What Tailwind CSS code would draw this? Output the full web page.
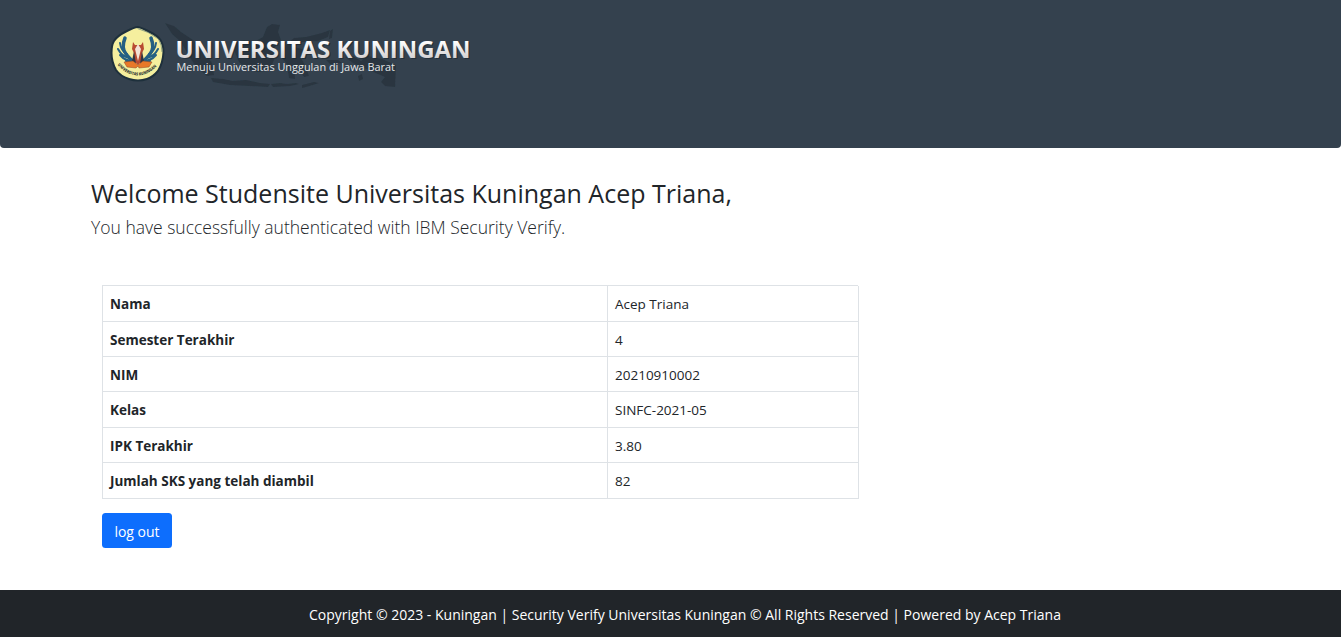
<!DOCTYPE html>
<html lang="id">
<head>
<meta charset="utf-8">
<title>Studensite Universitas Kuningan</title>
<script src="https://cdn.jsdelivr.net/npm/@tailwindcss/browser@4"></script>
</head>
<body class="h-[637px] overflow-hidden bg-white text-[#212529] font-['Open_Sans','Noto_Sans',sans-serif] text-[14px] flex flex-col">
<header class="h-[148px] shrink-0 bg-[#34414e] rounded-b-[4px] pl-[104px] pt-4">
<svg width="380" height="76" viewBox="104 16 380 76" role="img" aria-label="Universitas Kuningan">
  <defs>
    <linearGradient id="silver" x1="0" y1="0" x2="0" y2="1"><stop offset=".3" stop-color="#fff"/><stop offset=".8" stop-color="#d5d2d3"/></linearGradient>
    <path id="ring" d="M117.500 65 Q137.500 86 158.500 65"/>
    <filter id="soft"><feGaussianBlur stdDeviation=".6"/></filter>
  </defs>
  <g fill="#293640" filter="url(#soft)">
    <path d="M165 23l9 3 7 6 12 8 11 12 8 11 2 12-7 1-10-8-8-12-8-14-9-8z"/>
    <path d="M236 42l8-2 12 1 7-4 4-10 5-3 8 1-2 7 3 8-6 7-1 13-5 11-12 1-10-3-8-7-5-12z"/>
    <path d="M211 78l12 1 10 2 13-1 14 3 10 1-2 3-18-1-20-1-17-3z"/>
    <path d="M286 45l8-7 12-1 16-4 8-3-2 7-10 4-16 1-8 5 8 2 9-1-5 6-5 4 5 9 3 9-5 1-6-10-4 1 1 11-6-1-2-14-5-6z"/>
    <path d="M271 84l9-1 7 1 9-1 3 1-9 2-17 1zM302 85l12-3 5 1-13 4-4 1zM330 31l3-2-1 9-3 1zM326 60h12l4 3-12 1zM345 57l8-1 8 5 7-5 14 3 14 6-1 22-10-1-4-4 4-5-14-6-9-4-9-4zM358 76l4-2 1 5-4 2z"/>
  </g>
  <path d="M137.500 27 Q140 27 149 31.500 Q158 36 160.500 40 Q163.500 45 163.500 52 Q163 63 158 71 Q153 77 147 79 Q138 82 129 79 Q120 76 116 70 Q111.500 62 111.500 53 Q111.500 45 114 41 Q117 36 126 31.500 Q135 27 137.500 27z" fill="#f5ef9e" stroke="#1e303c" stroke-width="2"/>
  <path d="M137.500 28.500 Q148 31 158.500 39 Q162 45 162 52" fill="none" stroke="#52736e" stroke-width=".6"/>
  <g fill="none" stroke="#256083" stroke-linecap="round">
    <path d="M125 38q-4 10 1 16t8 8M151 38q4 10-1 16t-8 8" stroke-width="3.500"/>
    <path d="M120 43q1 8 7 11M156 43q-1 8-7 11M118 49q4 8 12 9M158 49q-4 8-12 9M120 55q5 6 13 6M156 55q-5 6-13 6M126 61h7M150 61h-7" stroke-width="2"/>
  </g>
  <path d="M133 42l2 3h6l2-3 1 7-2 4v8l-4 4-4-4v-8l-2-4z" fill="#b84b32"/>
  <path d="M138 44l-3 5 3 12 3-12z" fill="#f4e2d6"/>
  <path d="M134 51l-2 10 4 3zM142 51l2 10-4 3z" fill="#333541"/>
  <path d="M124 62l9-1 5 4 5-4 9 1-3 5-10 1-1-2-2 2-9-1z" fill="#e87828" stroke="#8b4927" stroke-width=".5"/>
  <text font-family="Open Sans" font-size="4.200" font-weight="800" fill="#343c36"><textPath href="#ring" textLength="45" lengthAdjust="spacingAndGlyphs">UNIVERSITAS KUNINGAN</textPath></text>
  <text x="176" y="58" transform="translate(.8 1.2)" textLength="295" lengthAdjust="spacingAndGlyphs" font-family="Open Sans" font-weight="700" font-size="24" fill="#1e2932" opacity=".7">UNIVERSITAS KUNINGAN</text>
  <text x="175.500" y="57.500" textLength="295" lengthAdjust="spacingAndGlyphs" font-family="Open Sans" font-weight="700" font-size="24" fill="url(#silver)">UNIVERSITAS KUNINGAN</text>
  <text x="176.500" y="71" textLength="218.500" lengthAdjust="spacingAndGlyphs" font-family="Open Sans" font-size="11" fill="#e6e8ea">Menuju Universitas Unggulan di Jawa Barat</text>
</svg>
</header>
<main class="flex-1 pl-[91px] pt-[28px]">
  <h1 class="h-[34px] leading-[34px] text-[25px] font-medium whitespace-nowrap"><span class="tracking-[0px]">Welcome Studensite Universitas Kuningan Acep Triana,</span></h1>
  <p class="mt-1 h-[27px] leading-[27px] text-[17.500px] font-light whitespace-nowrap"><span class="tracking-[0px]">You have successfully authenticated with IBM Security Verify.</span></p>
  <div class="ml-[11px] mt-[44px] w-[756px] grid grid-cols-[505px_251px] grid-rows-[36px_35px_35px_36px_35px_36px] border-t border-l border-[#dee2e6] *:border-b *:border-r *:border-[#dee2e6] *:pl-[7px] *:pt-[3px] *:leading-[30px] *:whitespace-nowrap text-[13.500px]">
    <b>Nama</b><span>Acep Triana</span>
    <b>Semester Terakhir</b><span>4</span>
    <b>NIM</b><span>20210910002</span>
    <b>Kelas</b><span>SINFC-2021-05</span>
    <b>IPK Terakhir</b><span>3.80</span>
    <b>Jumlah SKS yang telah diambil</b><span>82</span>
  </div>
  <button class="ml-[11px] mt-[14px] w-[70px] h-[35px] rounded-[3.500px] bg-[#0d6efd] text-white pt-px">log out</button>
</main>
<footer class="h-[47px] shrink-0 bg-[#212529] text-white pl-[309px] leading-[50px] whitespace-nowrap"><span class="tracking-[0px]">Copyright © 2023 - Kuningan | Security Verify Universitas Kuningan © All Rights Reserved | Powered by Acep Triana</span></footer>
</body>
</html>
